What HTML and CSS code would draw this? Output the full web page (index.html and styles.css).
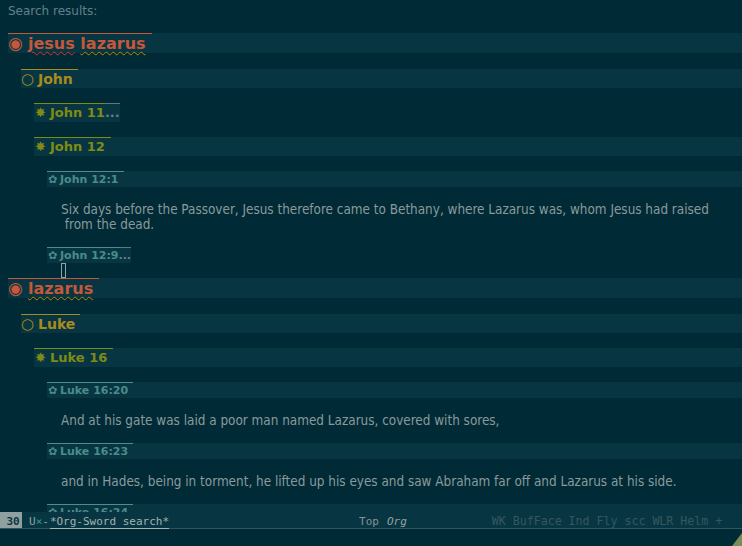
FILE: index.html
```html
<!DOCTYPE html>
<html>
<head>
<meta charset="utf-8">
<link rel="stylesheet" href="styles.css">
</head>
<body>
<div class="frame">
  <div class="buffer">
    <div class="title">Search results:</div>

    <div class="row l1"><span class="head"><span class="bullet">◉</span><span class="txt"><span class="spell-red">jesus</span> <span class="spell-yel">lazarus</span></span></span></div>
    <div class="row l2"><span class="head"><span class="bullet">○</span><span class="txt">John</span></span></div>
    <div class="row l3 folded"><span class="head"><span class="bullet">✸</span><span class="txt">John 11</span><span class="ellipsis">...</span></span></div>
    <div class="row l3"><span class="head"><span class="bullet">✸</span><span class="txt">John 12</span></span></div>
    <div class="row l4"><span class="head"><span class="bullet">✿</span><span class="txt">John 12:1</span></span></div>
    <div class="verse">Six days before the Passover, Jesus therefore came to Bethany, where Lazarus was, whom Jesus had raised
 from the dead.</div>
    <div class="row l4 folded tight"><span class="head"><span class="bullet">✿</span><span class="txt">John 12:9</span><span class="ellipsis">...</span></span></div>
    <div class="cursorline"><span class="cursor"></span></div>

    <div class="row l1"><span class="head"><span class="bullet">◉</span><span class="txt"><span class="spell-yel">lazarus</span></span></span></div>
    <div class="row l2"><span class="head"><span class="bullet">○</span><span class="txt">Luke</span></span></div>
    <div class="row l3"><span class="head"><span class="bullet">✸</span><span class="txt">Luke 16</span></span></div>
    <div class="row l4"><span class="head"><span class="bullet">✿</span><span class="txt">Luke 16:20</span></span></div>
    <div class="verse">And at his gate was laid a poor man named Lazarus, covered with sores,</div>
    <div class="row l4"><span class="head"><span class="bullet">✿</span><span class="txt">Luke 16:23</span></span></div>
    <div class="verse">and in Hades, being in torment, he lifted up his eyes and saw Abraham far off and Lazarus at his side.</div>
    <div class="row l4"><span class="head"><span class="bullet">✿</span><span class="txt">Luke 16:24</span></span></div>
  </div>

  <div class="modeline">
    <span class="winnum">30</span>
    <span class="flags"><span class="fl-u">U</span><span class="fl-x">×</span><span class="fl-d">-</span></span>
    <span class="bufname">*Org-Sword search*</span>
    <span class="pos">Top</span>
    <span class="major">Org</span>
    <span class="minors">WK BufFace Ind Fly scc WLR Helm +</span>
  </div>
  <div class="echo"><span class="grip"></span></div>
</div>
</body>
</html>
```

FILE: styles.css
```css
html, body {
  margin: 0;
  padding: 0;
  background: #002b36;
}

.frame {
  width: 742px;
  height: 546px;
  display: flex;
  flex-direction: column;
  background: #002b36;
  overflow: hidden;
}

.buffer {
  height: 512px;
  overflow: hidden;
  display: flex;
  flex-direction: column;
  flex: none;
}

.title {
  height: 18px;
  margin-bottom: 15px;
  padding-left: 8px;
  box-sizing: border-box;
  padding-top: 3px;
  font-family: "DejaVu Sans", sans-serif;
  font-size: 12px;
  line-height: 16px;
  color: #62808a;
  white-space: pre;
}

.row {
  display: flex;
  align-items: flex-start;
  background: #073642;
  margin-bottom: 15px;
  flex: none;
  font-family: "DejaVu Sans", sans-serif;
  font-weight: bold;
  white-space: pre;
}

.row.folded {
  background: transparent;
}

.row.folded .head {
  background: #073642;
  padding-right: 0;
}

.row.tight {
  margin-bottom: 0;
}

.head {
  display: flex;
  align-items: baseline;
  border-top: 1px solid;
  padding-right: 6px;
  box-sizing: border-box;
}

.bullet {
  display: inline-block;
  font-weight: normal;
  padding-left: 1px;
}

.ellipsis {
  align-self: flex-start;
  margin-top: -1px;
  border-top: 1px solid #5f767c;
  color: #6b7f84;
}

.l1 {
  margin-left: 8px;
  height: 20px;
  margin-bottom: 16px;
  font-size: 16px;
  color: #c5573a;
}
.l1 .head { height: 20px; line-height: 19px; border-top-color: #c5573a; }
.l1 .bullet { width: 20px; font-size: 17px; padding-left: 0; }

.l2 {
  margin-left: 21px;
  height: 19px;
  font-size: 14px;
  color: #a98a1e;
}
.l2 .head { height: 19px; line-height: 18px; border-top-color: #a98a1e; padding-right: 5px; }
.l2 .bullet { width: 17px; font-size: 15px; padding-left: 0; }

.l3 {
  margin-left: 34px;
  height: 19px;
  font-size: 13px;
  color: #7f8c14;
}
.l3 .head { height: 19px; line-height: 18px; border-top-color: #7f8c14; }
.l3 .bullet { width: 15px; font-size: 13px; }

.l4 {
  margin-left: 47px;
  height: 16px;
  font-size: 11px;
  color: #4a8c8a;
}
.l4 .head { height: 16px; line-height: 15px; border-top-color: #4f8d8c; padding-right: 5px; }
.l4 .bullet { width: 12px; font-size: 11px; }

.spell-red {
  text-decoration: underline wavy #dc322f;
  text-decoration-thickness: 1px;
  text-underline-offset: 2px;
}
.spell-yel {
  text-decoration: underline wavy #b58900;
  text-decoration-thickness: 1px;
  text-underline-offset: 2px;
}

.verse {
  padding-left: 61px;
  margin-bottom: 15px;
  font-family: "DejaVu Sans Condensed", "DejaVu Sans", sans-serif;
  font-stretch: condensed;
  font-size: 13.4px;
  line-height: 15px;
  color: #8a9a9c;
  white-space: pre;
  flex: none;
}

.cursorline {
  height: 15px;
  padding-left: 61px;
  flex: none;
}
.cursor {
  display: block;
  width: 3px;
  height: 13px;
  border: 1px solid #8fa3a8;
}

.modeline {
  flex: none;
  height: 17px;
  box-sizing: border-box;
  background: #073642;
  border-bottom: 1px solid #2f5560;
  display: flex;
  align-items: flex-end;
  font-family: "DejaVu Sans Mono", monospace;
  font-size: 11px;
  line-height: 13px;
  color: #93a1a1;
  white-space: pre;
}

.winnum {
  align-self: stretch;
  width: 22px;
  background: #8fa0a0;
  color: #0f3540;
  display: flex;
  align-items: flex-end;
  justify-content: center;
  box-sizing: border-box;
  padding-left: 4px;
  font-weight: bold;
}

.flags {
  margin-left: 7px;
}
.fl-u { color: #93a1a1; }
.fl-x { color: #2aa198; }
.fl-d { color: #93a1a1; }

.bufname {
  margin-left: 1px;
  color: #a3b1b1;
  box-shadow: 0 1px 0 #a3b1b1;
}

.pos {
  margin-left: 190px;
  color: #839496;
}

.major {
  margin-left: 8px;
  font-style: italic;
  color: #93a1a1;
}

.minors {
  margin-left: 85px;
  font-size: 11.6px;
  color: #35565f;
}

.echo {
  flex: 1;
  display: flex;
  justify-content: flex-end;
  align-items: flex-end;
}

.grip {
  width: 0;
  height: 0;
  border-left: 10px solid transparent;
  border-bottom: 13px solid #7b8a57;
}
```
